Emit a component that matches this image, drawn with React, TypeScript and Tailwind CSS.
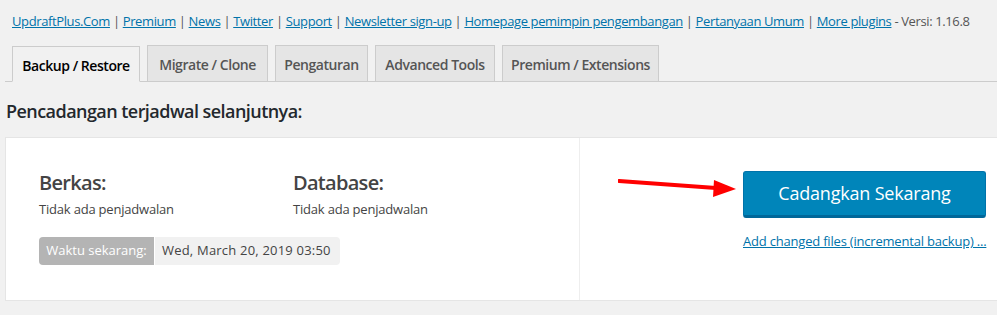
const FONT = "font-['Segoe_UI','Open_Sans',sans-serif]";

const LINKS = [
  'UpdraftPlus.Com',
  'Premium',
  'News',
  'Twitter',
  'Support',
  'Newsletter sign-up',
  'Homepage pemimpin pengembangan',
  'Pertanyaan Umum',
  'More plugins',
];

const TABS = [
  { name: 'Backup / Restore', w: 'w-[128px]', active: true },
  { name: 'Migrate / Clone', w: 'w-[121px]' },
  { name: 'Pengaturan', w: 'w-[93px]' },
  { name: 'Advanced Tools', w: 'w-[120px]' },
  { name: 'Premium / Extensions', w: 'w-[157px]' },
];

function Arrow() {
  return (
    <svg className="absolute left-[38px] top-[41px]" width="120" height="20" viewBox="0 0 120 20">
      <line x1="1" y1="2" x2="98" y2="9" stroke="#ff0000" strokeWidth="4" strokeLinecap="round" />
      <polygon points="96,1 118,10 95,18" fill="#ff0000" />
    </svg>
  );
}

export default function App() {
  return (
    <div className={`w-[997px] h-[315px] overflow-hidden bg-[#f1f1f1] text-[#444] ${FONT}`}>
      {/* plugin links */}
      <div className="pl-[12px] pt-[12px] h-[46px] text-[13px] leading-[18px] tracking-[-0.38px] whitespace-nowrap">
        {LINKS.map((l, i) => (
          <span key={l}>
            {i > 0 && <span className="text-[#555]"> | </span>}
            <a href="#" className="text-[#0073aa] underline">{l}</a>
          </span>
        ))}
        <span className="text-[#555]"> - Versi: 1.16.8</span>
      </div>

      {/* tabs */}
      <div className="ml-[5px] flex items-end gap-[7px] pl-[7px] border-b border-[#ccc] h-[36px]">
        {TABS.map((t) => (
          <div
            key={t.name}
            className={`${t.w} h-[36px] flex items-center justify-center border border-[#ccc] text-[14px] font-semibold tracking-[-0.45px] ${
              t.active ? 'bg-[#f1f1f1] text-black border-b-[#f1f1f1] -mb-px pt-[2px]' : 'bg-[#e5e5e5] text-[#555] border-b-0 h-[35px] pt-[2px]'
            }`}
          >
            {t.name}
          </div>
        ))}
      </div>

      <h2 className="pl-[6px] mt-[17px] text-[18px] leading-[24px] font-semibold tracking-[-0.55px] text-[#23282d]">
        Pencadangan terjadwal selanjutnya:
      </h2>

      {/* schedule card */}
      <div className="ml-[5px] mt-[14px] h-[164px] flex bg-white border border-r-0 border-[#e5e5e5]">
        <div className="w-[574px] pl-[33px] pt-[31px] border-r border-[#eee]">
          <div className="flex">
            <div className="w-[254px]">
              <h3 className="text-[20px] leading-[28px] font-semibold tracking-[-0.7px] text-[#444]">Berkas:</h3>
              <p className="mt-[3px] text-[13px] leading-[18px] tracking-[-0.2px]">Tidak ada penjadwalan</p>
            </div>
            <div>
              <h3 className="text-[20px] leading-[28px] font-semibold tracking-[-0.7px] text-[#444]">Database:</h3>
              <p className="mt-[3px] text-[13px] leading-[18px] tracking-[-0.2px]">Tidak ada penjadwalan</p>
            </div>
          </div>
          <div className="mt-[19px] flex h-[28px] w-[301px] text-[13px] rounded-[4px] overflow-hidden">
            <span className="w-[115px] bg-[#b4b4b4] text-white flex items-center justify-center">Waktu sekarang:</span>
            <span className="ml-px flex-1 bg-[#f1f1f1] text-[#444] flex items-center pl-[7px] tracking-[0.2px]">
              Wed, March 20, 2019 03:50
            </span>
          </div>
        </div>
        <div className="relative flex-1 pl-[163px] pt-[33px]">
          <Arrow />
          <button className="w-[243px] h-[47px] bg-[#0085ba] border border-[#0073aa] border-b-[3px] border-b-[#006799] rounded-[3px] text-white text-[18px] tracking-[-0.2px]">
            Cadangkan Sekarang
          </button>
          <div className="mt-[14px] w-[243px] text-[13px] leading-[18px] tracking-[-0.2px] whitespace-nowrap">
            <a href="#" className="text-[#0073aa] underline">Add changed files (incremental backup) ...</a>
          </div>
        </div>
      </div>
    </div>
  );
}
